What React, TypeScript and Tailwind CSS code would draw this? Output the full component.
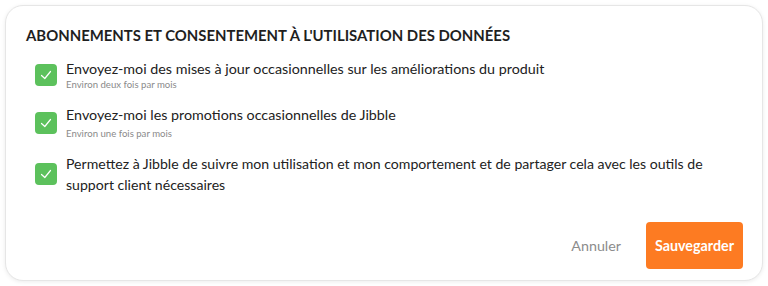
import React from "react";

function Check() {
  return (
    <div className="w-[22px] h-[22px] rounded-[4px] bg-[#5cc15c] flex items-center justify-center shrink-0">
      <svg width="14" height="14" viewBox="0 0 14 14" fill="none">
        <path d="M2.5 7.5 L5.8 10.5 L11.5 3.5" stroke="white" strokeWidth="1.2" strokeLinecap="round" strokeLinejoin="round" />
      </svg>
    </div>
  );
}

export default function App() {
  return (
    <div className="w-[768px] h-[286px] bg-white p-[5px]" style={{ fontFamily: "Lato, 'Noto Sans', sans-serif" }}>
      <div className="w-full h-full rounded-[18px] border border-[#e6e6e6] shadow-[0_1px_4px_rgba(0,0,0,0.08)] bg-white flex flex-col pl-[20px] pr-[19px] pt-[20px] pb-[11px]">
        <h1 className="text-[14.9px] font-bold text-[#1f1f1f] leading-[18px]">
          ABONNEMENTS ET CONSENTEMENT À L'UTILISATION DES DONNÉES
        </h1>
        <div className="flex flex-col mt-[15px] pl-[9px]">
          <div className="flex items-center gap-[9px]">
            <Check />
            <div className="flex flex-col">
              <span className="text-[14.3px] text-[#222] leading-[19px]">Envoyez-moi des mises à jour occasionnelles sur les améliorations du produit</span>
              <span className="text-[9.6px] text-[#8a8a8a] leading-[13px]">Environ deux fois par mois</span>
            </div>
          </div>
          <div className="flex items-center gap-[9px] mt-[14px]">
            <Check />
            <div className="flex flex-col">
              <span className="text-[14.3px] text-[#222] leading-[19px]">Envoyez-moi les promotions occasionnelles de Jibble</span>
              <span className="text-[9.6px] text-[#8a8a8a] leading-[13px] mt-[3px]">Environ une fois par mois</span>
            </div>
          </div>
          <div className="flex items-center gap-[9px] mt-[13px]">
            <Check />
            <span className="text-[14.1px] text-[#222] leading-[21px] w-[660px]">
              Permettez à Jibble de suivre mon utilisation et mon comportement et de partager cela avec les outils de support client nécessaires
            </span>
          </div>
        </div>
        <div className="flex justify-end items-center mt-auto gap-[25px]">
          <button className="text-[14.3px] text-[#8c8c8c]">Annuler</button>
          <button className="w-[97px] h-[47px] rounded-[4px] bg-[#fd7b22] text-white text-[14.3px] font-bold">Sauvegarder</button>
        </div>
      </div>
    </div>
  );
}
